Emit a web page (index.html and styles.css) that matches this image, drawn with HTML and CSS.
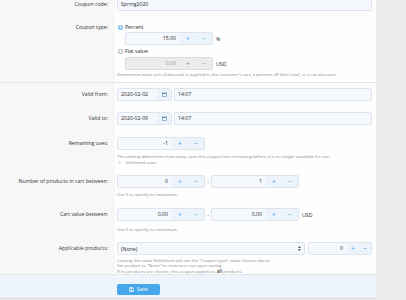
FILE: index.html
```html
<!DOCTYPE html>
<html>
<head>
<meta charset="utf-8">
<link rel="stylesheet" href="styles.css">
</head>
<body>
<div class="panel">
  <div class="row r1">
    <div class="lbl">Coupon code:</div>
    <div class="ctl"><div class="inp">Spring2020</div></div>
  </div>

  <div class="row r2 sep">
    <div class="lbl lbl-radio">Coupon type:</div>
    <div class="ctl">
      <div class="radio-line"><span class="radio on"></span>Percent</div>
      <div class="indent line"><div class="num"><span class="v">15.00</span><span class="b">+</span><span class="b">−</span></div><span class="unit">%</span></div>
      <div class="radio-line second"><span class="radio"></span>Flat value</div>
      <div class="indent line flat"><div class="num dis"><span class="v">0.00</span><span class="b">+</span><span class="b">−</span></div><span class="unit">USD</span></div>
      <div class="help first">Determines what sort of discount is applied to the customer's cart, a percent off their total, or a set discount.</div>
    </div>
  </div>

  <div class="row r3">
    <div class="lbl">Valid from:</div>
    <div class="ctl line">
      <div class="date"><span class="dv">2020-02-02</span><span class="cal"><svg width="5" height="5" viewBox="0 0 10 10"><rect x="1" y="2" width="8" height="7" fill="none" stroke="#5b8fbf" stroke-width="1.3"/><rect x="1" y="2" width="8" height="2" fill="#5b8fbf"/></svg></span></div>
      <div class="inp time">14:07</div>
    </div>
  </div>

  <div class="row r4">
    <div class="lbl">Valid to:</div>
    <div class="ctl line">
      <div class="date"><span class="dv">2020-02-09</span><span class="cal"><svg width="5" height="5" viewBox="0 0 10 10"><rect x="1" y="2" width="8" height="7" fill="none" stroke="#5b8fbf" stroke-width="1.3"/><rect x="1" y="2" width="8" height="2" fill="#5b8fbf"/></svg></span></div>
      <div class="inp time">14:07</div>
    </div>
  </div>

  <div class="row r5">
    <div class="lbl">Remaining uses:</div>
    <div class="ctl">
      <div class="line"><div class="num"><span class="v">-1</span><span class="b">+</span><span class="b">−</span></div></div>
      <div class="help">This setting determines how many uses this coupon has remaining before it is no longer available for use.<br>-1 = Unlimited uses.</div>
    </div>
  </div>

  <div class="row r6">
    <div class="lbl">Number of products in cart between:</div>
    <div class="ctl">
      <div class="line"><div class="num"><span class="v">0</span><span class="b">+</span><span class="b">−</span></div><span class="dash">-</span><div class="num"><span class="v">1</span><span class="b">+</span><span class="b">−</span></div></div>
      <div class="help">Use 0 to specify no maximum.</div>
    </div>
  </div>

  <div class="row r7">
    <div class="lbl">Cart value between:</div>
    <div class="ctl">
      <div class="line"><div class="num"><span class="v">0,00</span><span class="b">+</span><span class="b">−</span></div><span class="dash">-</span><div class="num"><span class="v">0,00</span><span class="b">+</span><span class="b">−</span></div><span class="unit">USD</span></div>
      <div class="help lower">Use 0 to specify no maximum.</div>
    </div>
  </div>

  <div class="row r8">
    <div class="lbl">Applicable products:</div>
    <div class="ctl">
      <div class="line">
        <div class="select"><span>(None)</span><svg width="3" height="5" viewBox="0 0 6 10"><path d="M3 0L6 4H0z M3 10L0 6H6z" fill="#555"/></svg></div>
        <div class="num small"><span class="v">0</span><span class="b">+</span><span class="b">−</span></div>
      </div>
      <div class="help tight">Leaving the value field blank will use the "Coupon type" value chosen above.<br>Set product to "None" to remove a row upon saving.<br>If no products are chosen, this coupon applies to <b>all</b> products.</div>
    </div>
  </div>

  <div class="submit">
    <button class="save"><svg width="5" height="5" viewBox="0 0 10 10"><path d="M1 1h6.5L9 2.5V9H1z" fill="none" stroke="#fff" stroke-width="1.2"/><rect x="3" y="1" width="4" height="3" fill="#fff"/><rect x="3" y="6" width="4" height="3" fill="#fff"/></svg>Save</button>
  </div>
</div>
</body>
</html>
```

FILE: styles.css
```css
* { box-sizing: border-box; margin: 0; padding: 0; }
html, body { width: 406px; height: 300px; overflow: hidden; }
body {
  background: #ececec;
  font-family: "Open Sans", "Noto Sans", sans-serif;
  color: #2a2a2a;
  font-size: 5.2px;
}
.panel {
  width: 376px;
  background: #fefefe;
  margin-top: -6px;
  border-bottom: 1px solid #d9d9d9;
}
.row { display: flex; }
.sep { border-bottom: 1px solid #e6e6e6; }
.lbl {
  width: 115px;
  flex: none;
  background: #f7f7f7;
  text-align: right;
  padding-right: 7px;
  line-height: 13px;
  color: #333;
}
.lbl-radio { line-height: 9px; }
.ctl {
  flex: 1;
  padding-left: 2px;
  padding-right: 4px;
}
.line { display: flex; align-items: center; }

.r1 > * { padding-top: 4px; padding-bottom: 5px; }
.r2 > * { padding-top: 7px; padding-bottom: 5px; }
.r3 > * { padding-top: 5px; padding-bottom: 5px; }
.r4 > * { padding-top: 6px; padding-bottom: 6px; }
.r5 > * { padding-top: 6px; padding-bottom: 4px; }
.r6 > * { padding-top: 6px; padding-bottom: 5px; }
.r7 > * { padding-top: 6px; padding-bottom: 4px; }
.r8 > * { padding-top: 6px; padding-bottom: 0; }

.inp {
  height: 13px;
  border: 1px solid #dde4ec;
  border-radius: 2px;
  background: #f5f8fc;
  line-height: 11px;
  padding: 0 3px;
}
.radio-line {
  height: 9px;
  line-height: 9px;
  display: flex;
  align-items: center;
}
.radio-line.second { margin-top: 2px; }
.radio {
  width: 5px; height: 5px;
  border-radius: 50%;
  border: 1px solid #9aa4ae;
  background: #fff;
  margin-left: 1px;
  margin-right: 2px;
}
.radio.on { border-color: #47a7eb; box-shadow: inset 0 0 0 1px #cfe6f8; }
.indent { padding-left: 8px; }
.flat { margin-top: 1px; }

.num {
  display: flex;
  width: 88px;
  height: 13px;
  border: 1px solid #dde4ec;
  border-radius: 2px;
  background: #f5f8fc;
  line-height: 11px;
  overflow: hidden;
}
.num .v { flex: 1; text-align: right; padding-right: 4px; }
.num .b {
  width: 16px;
  text-align: center;
  color: #47a7eb;
  background: #edf3fa;
  font-size: 7px;
}
.num.dis { background: #ececec; border-color: #dcdcdc; }
.num.dis .v { color: #9a9a9a; }
.num.dis .b { background: #ececec; color: #9a9a9a; }
.unit { margin-left: 3px; }
.dash { width: 6px; text-align: center; }

.help {
  font-size: 4.35px;
  line-height: 6px;
  color: #8a8a8a;
  margin-top: 3px;
}
.help.first { margin-top: 1px; }
.help.lower { margin-top: 5px; }
.help.tight { line-height: 5.3px; }
.help b { color: #555; }

.date {
  display: flex;
  width: 55px;
  height: 13px;
  border: 1px solid #dde4ec;
  border-radius: 2px;
  background: #f5f8fc;
  line-height: 11px;
  overflow: hidden;
}
.dv { flex: 1; padding-left: 3px; }
.cal {
  width: 14px;
  background: #edf3fa;
  display: flex;
  align-items: center;
  justify-content: center;
}
.time { flex: 1; margin-left: 2px; }

.select {
  width: 188px;
  height: 13px;
  border: 1px solid #dde4ec;
  border-radius: 2px;
  background: #f5f8fc;
  display: flex;
  align-items: center;
  justify-content: space-between;
  padding: 0 3px;
}
.num.small { width: 64px; margin-left: 3px; }
.num.small .b { width: 12px; }

.submit {
  background: #edf4fb;
  border-top: 1px solid #dfe8f1;
  padding: 9px 0 3px 117px;
}
.save {
  width: 43px;
  height: 11px;
  background: #47a7eb;
  border: none;
  border-radius: 2px;
  color: #fff;
  font-family: "Open Sans", "Noto Sans", sans-serif;
  font-size: 5px;
  display: flex;
  align-items: center;
  justify-content: center;
  gap: 3px;
}
```
